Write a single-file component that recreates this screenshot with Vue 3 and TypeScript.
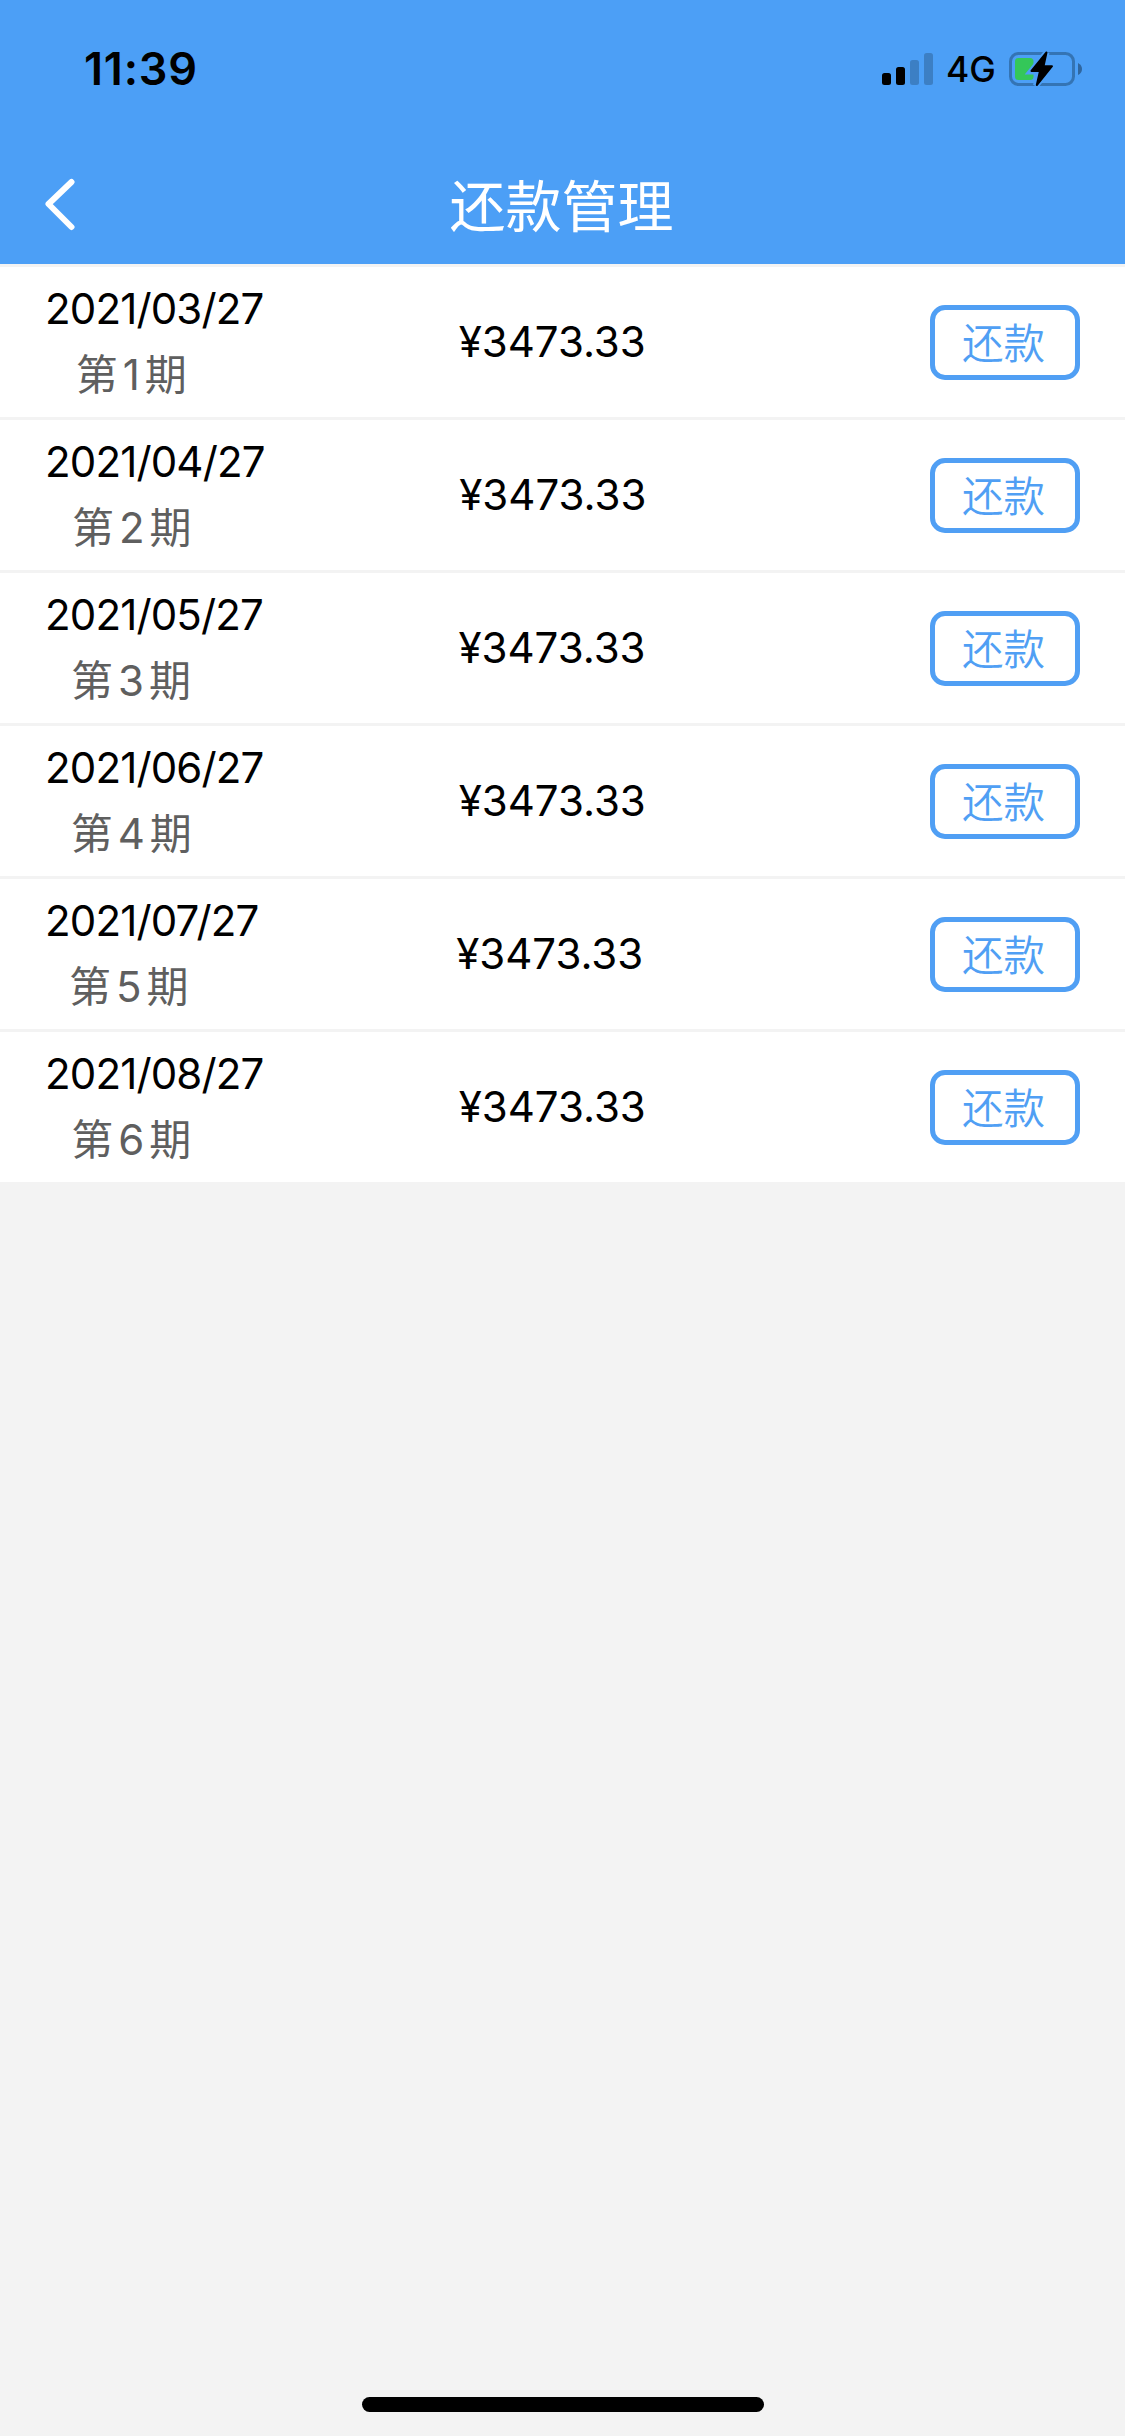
<script setup lang="ts">
interface Installment {
  month: string
  period: number
  amount: string
}

const installments: Installment[] = ['03', '04', '05', '06', '07', '08'].map((month, i) => ({
  month,
  period: i + 1,
  amount: '¥3473.33',
}))
</script>

<template>
  <div class="screen">
    <header class="header">
      <div class="status">
        <span class="time">11:39</span>
        <div class="indicators">
          <svg class="signal" width="51" height="32" viewBox="0 0 51 32">
            <rect x="0" y="20" width="9" height="12" rx="2.5" />
            <rect x="14" y="14" width="9" height="18" rx="2.5" />
            <rect x="28" y="7" width="9" height="25" rx="2.5" opacity=".2" />
            <rect x="42" y="0" width="9" height="32" rx="2.5" opacity=".2" />
          </svg>
          <span class="network">4G</span>
          <svg class="battery" width="75" height="36" viewBox="0 0 75 36">
            <rect x="1.5" y="2.5" width="63" height="31" rx="8" fill="none" stroke="#3474b4" stroke-width="3" />
            <rect x="6" y="7" width="18.5" height="22" rx="3.5" fill="#34c759" />
            <path d="M69 12 Q73 14 73 18 Q73 22 69 24Z" fill="#2f669f" />
            <path d="M37.5 1.5 L22 20.5 H30.5 L27 34.5 L43.5 14.7 H34.5Z" fill="#4c9ff6" stroke="#4c9ff6" stroke-width="6" />
            <path d="M37.5 1.5 L22.5 20 H31 L27.8 34 L43 15.2 H34.5Z" stroke="#000" stroke-width="2" stroke-linejoin="round" />
          </svg>
        </div>
      </div>
      <div class="nav">
        <svg class="back" width="32" height="54" viewBox="0 0 32 54">
          <path d="M27.5 5 L4.5 27 L27.5 50" fill="none" stroke="#fff" stroke-width="6" stroke-linecap="round" stroke-linejoin="round" />
        </svg>
        <h1 class="title">还款管理</h1>
      </div>
    </header>
    <main class="list">
      <section v-for="item in installments" :key="item.period" class="row">
        <div class="schedule">
          <span class="date">2021/<span :class="{ kerned: item.month.endsWith('7') }">{{ item.month }}</span>/27</span>
          <span class="period">第<span class="number">{{ item.period }}</span>期</span>
        </div>
        <span class="amount">{{ item.amount }}</span>
        <button class="repay" type="button">还款</button>
      </section>
    </main>
    <div class="home-bar"></div>
  </div>
</template>

<style>
body {
  margin: 0;
}
</style>

<style scoped>
.screen {
  width: 1125px;
  height: 2436px;
  display: flex;
  flex-direction: column;
  align-items: center;
  overflow: hidden;
  background: #f3f3f3;
  color: #000;
  font-family: Inter, "Noto Sans CJK SC", sans-serif;
}
.header {
  width: 100%;
  height: 264px;
  background: #4c9ff6;
}
.status {
  height: 138px;
  box-sizing: border-box;
  padding: 0 41px 0 84px;
  display: flex;
  align-items: center;
  justify-content: space-between;
}
.time {
  font-size: 45px;
  font-weight: 600;
  line-height: 54px;
  letter-spacing: 0.8px;
}
.indicators {
  display: flex;
  align-items: center;
}
.network {
  width: 49px;
  margin: 1px 14px 0 13px;
  font-size: 35.5px;
  font-weight: 500;
  line-height: 40px;
  white-space: nowrap;
}
.nav {
  height: 126px;
  padding: 0 44px;
  display: grid;
  grid-template-columns: 32px 1fr 32px;
  align-items: center;
}
.back {
  margin-top: 5px;
}
.title {
  margin: 12px 2px 0 0;
  color: #fff;
  font-size: 56px;
  font-weight: 400;
  line-height: 72px;
  text-align: center;
}
.list {
  width: 100%;
}
.row {
  height: 150px;
  margin-top: 3px;
  padding: 0 45px;
  display: flex;
  align-items: center;
  justify-content: space-between;
  background: #fff;
  font-size: 42px;
}
.schedule {
  display: flex;
  flex-direction: column;
  line-height: 66px;
}
.date {
  letter-spacing: -0.85px;
}
.kerned {
  margin-right: -2px;
}
.period {
  padding-right: 46px;
  color: #5f5f5f;
  text-align: center;
}
.number {
  margin: 0 5px;
}
.amount {
  margin: 0 89px 2px 0;
}
.repay {
  width: 150px;
  height: 75px;
  padding: 4px 3px 0 0;
  border: 5px solid #509ff4;
  border-radius: 15px;
  background: #fff;
  color: #509ff4;
  font: inherit;
  font-size: 41.5px;
  font-weight: 350;
  line-height: 61px;
}
.home-bar {
  width: 402px;
  height: 15px;
  margin: auto 0 24px;
  border-radius: 8px;
  background: #000;
}
</style>
